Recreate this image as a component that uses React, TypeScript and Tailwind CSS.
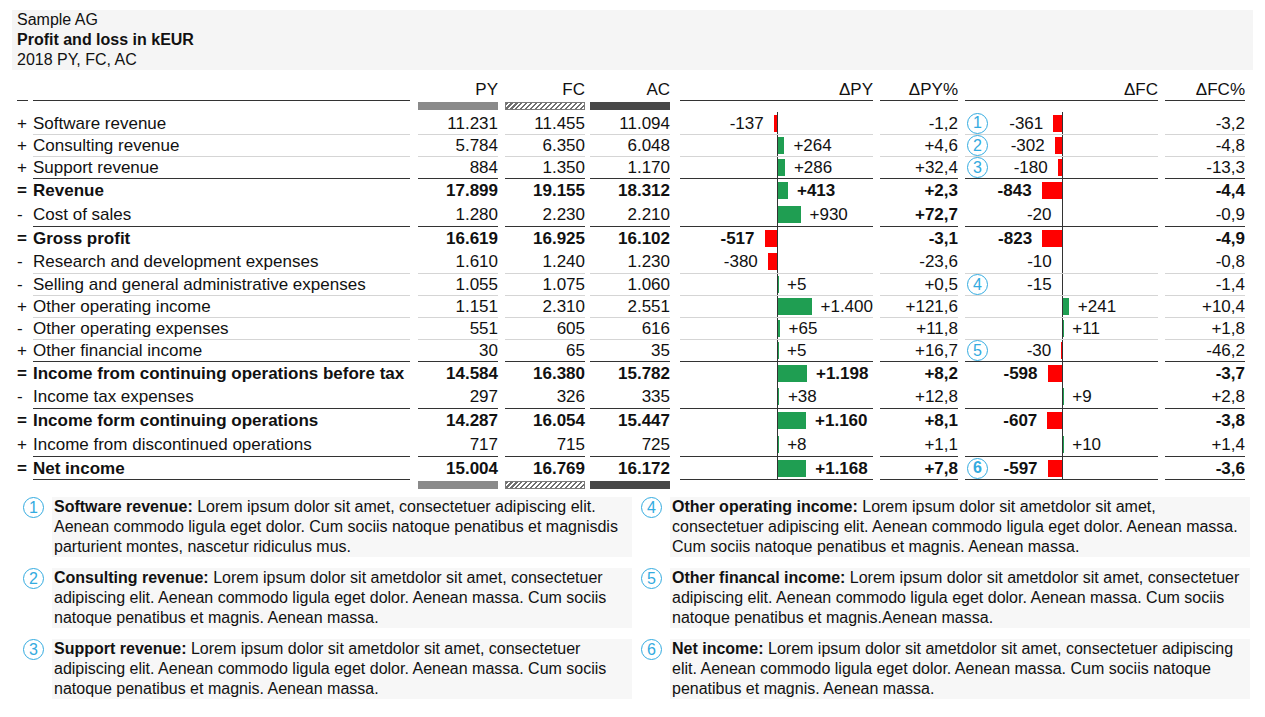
import React from "react";

type Row = {
  sign: string;
  label: string;
  total?: boolean;
  h: string;
  py: string;
  fc: string;
  ac: string;
  dpy: number;
  dpyp: string;
  dpypBold?: boolean;
  dfc: number;
  dfcp: string;
  note?: number;
};

const SCALE = 0.0242;

const rows: Row[] = [
  { sign: "+", label: "Software revenue", h: "h-[22px]", py: "11.231", fc: "11.455", ac: "11.094", dpy: -137, dpyp: "-1,2", dfc: -361, dfcp: "-3,2", note: 1 },
  { sign: "+", label: "Consulting revenue", h: "h-[22px]", py: "5.784", fc: "6.350", ac: "6.048", dpy: 264, dpyp: "+4,6", dfc: -302, dfcp: "-4,8", note: 2 },
  { sign: "+", label: "Support revenue", h: "h-[22px]", py: "884", fc: "1.350", ac: "1.170", dpy: 286, dpyp: "+32,4", dfc: -180, dfcp: "-13,3", note: 3 },
  { sign: "=", label: "Revenue", total: true, h: "h-[24px]", py: "17.899", fc: "19.155", ac: "18.312", dpy: 413, dpyp: "+2,3", dfc: -843, dfcp: "-4,4" },
  { sign: "-", label: "Cost of sales", h: "h-[24px]", py: "1.280", fc: "2.230", ac: "2.210", dpy: 930, dpyp: "+72,7", dpypBold: true, dfc: -20, dfcp: "-0,9" },
  { sign: "=", label: "Gross profit", total: true, h: "h-[24px]", py: "16.619", fc: "16.925", ac: "16.102", dpy: -517, dpyp: "-3,1", dfc: -823, dfcp: "-4,9" },
  { sign: "-", label: "Research and development expenses", h: "h-[23px]", py: "1.610", fc: "1.240", ac: "1.230", dpy: -380, dpyp: "-23,6", dfc: -10, dfcp: "-0,8" },
  { sign: "-", label: "Selling and general administrative expenses", h: "h-[22px]", py: "1.055", fc: "1.075", ac: "1.060", dpy: 5, dpyp: "+0,5", dfc: -15, dfcp: "-1,4", note: 4 },
  { sign: "+", label: "Other operating income", h: "h-[22px]", py: "1.151", fc: "2.310", ac: "2.551", dpy: 1400, dpyp: "+121,6", dfc: 241, dfcp: "+10,4" },
  { sign: "-", label: "Other operating expenses", h: "h-[22px]", py: "551", fc: "605", ac: "616", dpy: 65, dpyp: "+11,8", dfc: 11, dfcp: "+1,8" },
  { sign: "+", label: "Other financial income", h: "h-[22px]", py: "30", fc: "65", ac: "35", dpy: 5, dpyp: "+16,7", dfc: -30, dfcp: "-46,2", note: 5 },
  { sign: "=", label: "Income from continuing operations before tax", total: true, h: "h-[24px]", py: "14.584", fc: "16.380", ac: "15.782", dpy: 1198, dpyp: "+8,2", dfc: -598, dfcp: "-3,7" },
  { sign: "-", label: "Income tax expenses", h: "h-[23px]", py: "297", fc: "326", ac: "335", dpy: 38, dpyp: "+12,8", dfc: 9, dfcp: "+2,8" },
  { sign: "=", label: "Income form continuing operations", total: true, h: "h-[24px]", py: "14.287", fc: "16.054", ac: "15.447", dpy: 1160, dpyp: "+8,1", dfc: -607, dfcp: "-3,8" },
  { sign: "+", label: "Income from discontinued operations", h: "h-[24px]", py: "717", fc: "715", ac: "725", dpy: 8, dpyp: "+1,1", dfc: 10, dfcp: "+1,4" },
  { sign: "=", label: "Net income", total: true, h: "h-[24px]", py: "15.004", fc: "16.769", ac: "16.172", dpy: 1168, dpyp: "+7,8", dfc: -597, dfcp: "-3,6", note: 6 },
];

const notes = [
  {
    n: 1,
    title: "Software revenue:",
    lines: [
      " Lorem ipsum dolor sit amet, consectetuer adipiscing elit.",
      "Aenean commodo ligula eget dolor. Cum sociis natoque penatibus et magnisdis",
      "parturient montes, nascetur ridiculus mus.",
    ],
  },
  {
    n: 4,
    title: "Other operating income:",
    lines: [
      " Lorem ipsum dolor sit ametdolor sit amet,",
      "consectetuer adipiscing elit. Aenean commodo ligula eget dolor. Aenean massa.",
      "Cum sociis natoque penatibus et magnis. Aenean massa.",
    ],
  },
  {
    n: 2,
    title: "Consulting revenue:",
    lines: [
      " Lorem ipsum dolor sit ametdolor sit amet, consectetuer",
      "adipiscing elit. Aenean commodo ligula eget dolor. Aenean massa. Cum sociis",
      "natoque penatibus et magnis. Aenean massa.",
    ],
  },
  {
    n: 5,
    title: "Other financal income:",
    lines: [
      " Lorem ipsum dolor sit ametdolor sit amet, consectetuer",
      "adipiscing elit. Aenean commodo ligula eget dolor. Aenean massa. Cum sociis",
      "natoque penatibus et magnis.Aenean massa.",
    ],
  },
  {
    n: 3,
    title: "Support revenue:",
    lines: [
      " Lorem ipsum dolor sit ametdolor sit amet, consectetuer",
      "adipiscing elit. Aenean commodo ligula eget dolor. Aenean massa. Cum sociis",
      "natoque penatibus et magnis. Aenean massa.",
    ],
  },
  {
    n: 6,
    title: "Net income:",
    lines: [
      " Lorem ipsum dolor sit ametdolor sit amet, consectetuer adipiscing",
      "elit. Aenean commodo ligula eget dolor. Aenean massa. Cum sociis natoque",
      "penatibus et magnis. Aenean massa.",
    ],
  },
];

const fmt = (v: number) =>
  (v > 0 ? "+" : "-") + String(Math.abs(v)).replace(/\B(?=(\d{3})+(?!\d))/g, ".");

const Circle = ({ n, className = "" }: { n: number; className?: string }) => (
  <div
    className={`flex-none w-[21px] h-[21px] rounded-full border-[1.5px] border-[#33abe0] text-[#33abe0] text-[16px] leading-none flex items-center justify-center ${className}`}
  >
    {n}
  </div>
);

const DeltaBars = ({ v, note }: { v: number; note?: number }) => {
  const width = Math.abs(v) * SCALE;
  return (
    <div className="flex h-full">
      <div className="w-[97px] flex items-center justify-end">
        {note && <Circle n={note} className="ml-[2px] mr-auto" />}
        {v < 0 && (
          <>
            <span className="mr-[10px]">{fmt(v)}</span>
            <div className="h-[17px] bg-[#ff0000]" style={{ width }} />
          </>
        )}
      </div>
      <div className="flex-1 flex items-center border-l border-[#333]">
        {v > 0 && (
          <>
            <div className="h-[17px] bg-[#1f9e52]" style={{ width }} />
            <span className="ml-[9px]">{fmt(v)}</span>
          </>
        )}
      </div>
    </div>
  );
};

const LegendRow = ({ top }: { top?: boolean }) => (
  <div className={`flex pl-[17px] ${top ? "h-[11px]" : "h-[10px]"}`}>
    <div className="w-[11px]" />
    <div className="w-[377px] ml-[5px]" />
    <div className="w-[80px] ml-[8px] pt-px">
      <div className="h-[8px] bg-[#8a8a8a]" />
    </div>
    <div className="w-[80px] ml-[7px] pt-px">
      <div className="h-[8px] border border-[#7a7a7a] bg-[image:repeating-linear-gradient(135deg,#6e6e6e_0px,#6e6e6e_1.5px,#ffffff_1.5px,#ffffff_3.5px)]" />
    </div>
    <div className="w-[80px] ml-[5px] pt-px">
      <div className="h-[8px] bg-[#474747]" />
    </div>
  </div>
);

export default function App() {
  return (
    <div className="w-[1265px] min-h-[717px] bg-white text-[#111] font-['Liberation_Sans',Arial,sans-serif] pt-[10px]">
      <div className="ml-[12px] w-[1241px] h-[60px] bg-[#f5f5f5] pl-[5px] text-[16px] leading-[20px]">
        <div>Sample AG</div>
        <div className="font-bold">Profit and loss in kEUR</div>
        <div>2018 PY, FC, AC</div>
      </div>

      <div className="text-[17px] leading-none">
        <div className="flex pl-[17px] h-[23px] mt-[8px]">
          <div className="w-[11px] border-b border-[#333]" />
          <div className="w-[377px] ml-[5px] border-b border-[#333]" />
          <div className="w-[80px] ml-[8px] flex items-center justify-end">PY</div>
          <div className="w-[80px] ml-[7px] flex items-center justify-end">FC</div>
          <div className="w-[80px] ml-[5px] flex items-center justify-end">AC</div>
          <div className="w-[193px] ml-[10px] flex items-center justify-end border-b border-[#333]">ΔPY</div>
          <div className="w-[78px] ml-[7px] flex items-center justify-end border-b border-[#333]">ΔPY%</div>
          <div className="w-[193px] ml-[7px] flex items-center justify-end border-b border-[#333]">ΔFC</div>
          <div className="w-[80px] ml-[7px] flex items-center justify-end border-b border-[#333]">ΔFC%</div>
        </div>
        <LegendRow top />

        {rows.map((r, i) => {
          const prev = rows[i - 1];
          const line = r.total
            ? "border-t border-[#333]"
            : i === 0 || prev?.total
            ? ""
            : "border-t border-[#d5d5d5]";
          const last = i === rows.length - 1;
          const bottom = last ? "border-b border-[#333]" : "";
          return (
            <div key={r.label} className={`flex pl-[17px] ${r.h} ${r.total ? "font-bold" : ""}`}>
              <div className="w-[11px] flex items-center">{r.sign}</div>
              <div className={`w-[377px] ml-[5px] flex items-center whitespace-nowrap ${line} ${bottom}`}>{r.label}</div>
              <div className={`w-[80px] ml-[8px] flex items-center justify-end ${line}`}>{r.py}</div>
              <div className={`w-[80px] ml-[7px] flex items-center justify-end ${line}`}>{r.fc}</div>
              <div className={`w-[80px] ml-[5px] flex items-center justify-end ${line}`}>{r.ac}</div>
              <div className={`w-[193px] ml-[10px] ${line} ${bottom}`}>
                <DeltaBars v={r.dpy} />
              </div>
              <div className={`w-[78px] ml-[7px] flex items-center justify-end ${r.dpypBold ? "font-bold" : ""} ${line} ${bottom}`}>
                {r.dpyp}
              </div>
              <div className={`w-[193px] ml-[7px] ${line} ${bottom}`}>
                <DeltaBars v={r.dfc} note={r.note} />
              </div>
              <div className={`w-[80px] ml-[7px] flex items-center justify-end ${line} ${bottom}`}>{r.dfcp}</div>
            </div>
          );
        })}
        <LegendRow />
      </div>

      <div className="mt-[7px] grid grid-cols-[auto_auto] justify-start gap-y-[11px] text-[16px] leading-[20px]">
        {notes.map((n, i) => (
          <div key={n.n} className={`flex ${i % 2 === 0 ? "ml-[23px]" : "ml-[9px]"}`}>
            <Circle n={n.n} />
            <div className="ml-[8px] w-[580px] h-[60px] bg-[#f7f7f7] pl-[2px] whitespace-nowrap">
              <div>
                <span className="font-bold">{n.title}</span>
                {n.lines[0]}
              </div>
              <div>{n.lines[1]}</div>
              <div>{n.lines[2]}</div>
            </div>
          </div>
        ))}
      </div>
    </div>
  );
}
